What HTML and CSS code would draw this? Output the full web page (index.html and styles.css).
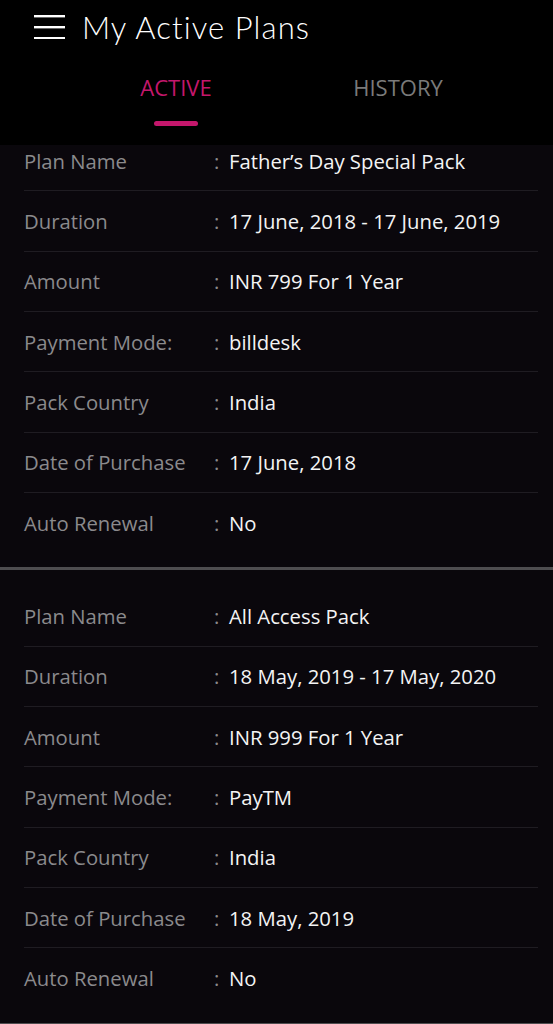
FILE: index.html
```html
<!DOCTYPE html>
<html lang="en">

<head>
    <meta charset="UTF-8">
    <meta name="viewport" content="width=device-width, initial-scale=1.0">
    <title>My Active Plans</title>
    <link rel="stylesheet" href="styles.css">
</head>

<body>
    <div class="topbar">
        <div class="title-row">
            <svg class="menu-icon" width="31" height="24" viewBox="0 0 31 24">
                <rect x="0" y="0" width="31" height="2.4" fill="#fff"/>
                <rect x="0" y="11" width="31" height="2.4" fill="#fff"/>
                <rect x="0" y="22" width="31" height="2.4" fill="#fff"/>
            </svg>
            <h1>My Active Plans</h1>
        </div>
        <div class="tabs">
            <div class="tab active">
                <span>ACTIVE</span>
                <div class="tab-line"></div>
            </div>
            <div class="tab">
                <span>HISTORY</span>
            </div>
        </div>
    </div>

    <div class="plans">
        <div class="plan first">
            <div class="row"><span class="label">Plan Name</span><span class="colon">:</span><span class="value">Father’s Day Special Pack</span></div>
            <div class="row"><span class="label">Duration</span><span class="colon">:</span><span class="value">17 June, 2018 - 17 June, 2019</span></div>
            <div class="row"><span class="label">Amount</span><span class="colon">:</span><span class="value">INR 799 For 1 Year</span></div>
            <div class="row"><span class="label">Payment Mode:</span><span class="colon">:</span><span class="value">billdesk</span></div>
            <div class="row"><span class="label">Pack Country</span><span class="colon">:</span><span class="value">India</span></div>
            <div class="row"><span class="label">Date of Purchase</span><span class="colon">:</span><span class="value">17 June, 2018</span></div>
            <div class="row"><span class="label">Auto Renewal</span><span class="colon">:</span><span class="value">No</span></div>
        </div>
        <div class="plan">
            <div class="row"><span class="label">Plan Name</span><span class="colon">:</span><span class="value">All Access Pack</span></div>
            <div class="row"><span class="label">Duration</span><span class="colon">:</span><span class="value">18 May, 2019 - 17 May, 2020</span></div>
            <div class="row"><span class="label">Amount</span><span class="colon">:</span><span class="value">INR 999 For 1 Year</span></div>
            <div class="row"><span class="label">Payment Mode:</span><span class="colon">:</span><span class="value">PayTM</span></div>
            <div class="row"><span class="label">Pack Country</span><span class="colon">:</span><span class="value">India</span></div>
            <div class="row"><span class="label">Date of Purchase</span><span class="colon">:</span><span class="value">18 May, 2019</span></div>
            <div class="row"><span class="label">Auto Renewal</span><span class="colon">:</span><span class="value">No</span></div>
        </div>
    </div>
</body>

</html>
```
FILE: styles.css
```css
body {
    margin: 0;
    background-color: #0a070c;
    font-family: "Open Sans", "DejaVu Sans", sans-serif;
    overflow: hidden;
    height: 1024px;
}

.topbar {
    position: relative;
    z-index: 1;
    background-color: #000;
    height: 145px;
}

.title-row {
    display: flex;
    align-items: center;
    height: 54px;
    padding-left: 34px;
}

.menu-icon {
    display: block;
    margin-right: 17px;
}

.title-row h1 {
    margin: 0;
    font-family: Lato, "Open Sans", sans-serif;
    font-weight: 300;
    font-size: 31px;
    color: #fff;
    letter-spacing: 1.1px;
}

.tabs {
    display: flex;
    padding-left: 65px;
}

.tab {
    width: 222px;
    display: flex;
    flex-direction: column;
    align-items: center;
    padding-top: 21px;
}

.tab span {
    font-size: 22px;
    line-height: 24px;
    color: #7a7a7a;
}

.tab.active span {
    color: #c4176c;
}

.tab-line {
    width: 44px;
    height: 5px;
    margin-top: 22px;
    border-radius: 3px;
    background-color: #c4176c;
}

.plan {
    padding: 16px 15px 14px 24px;
    border-bottom: 3px solid #4e4d50;
}

.plan.first {
    margin-top: -14px;
    padding-top: 0;
}

.row {
    display: flex;
    align-items: center;
    height: 60.33px;
    box-sizing: border-box;
    border-bottom: 1px solid #1f1c22;
    font-size: 20.3px;
}

.row:last-child {
    border-bottom: none;
}

.label {
    width: 190px;
    color: #8b8a8c;
}

.colon {
    width: 15px;
    color: #8b8a8c;
}

.value {
    color: #f4f4f4;
}
```
